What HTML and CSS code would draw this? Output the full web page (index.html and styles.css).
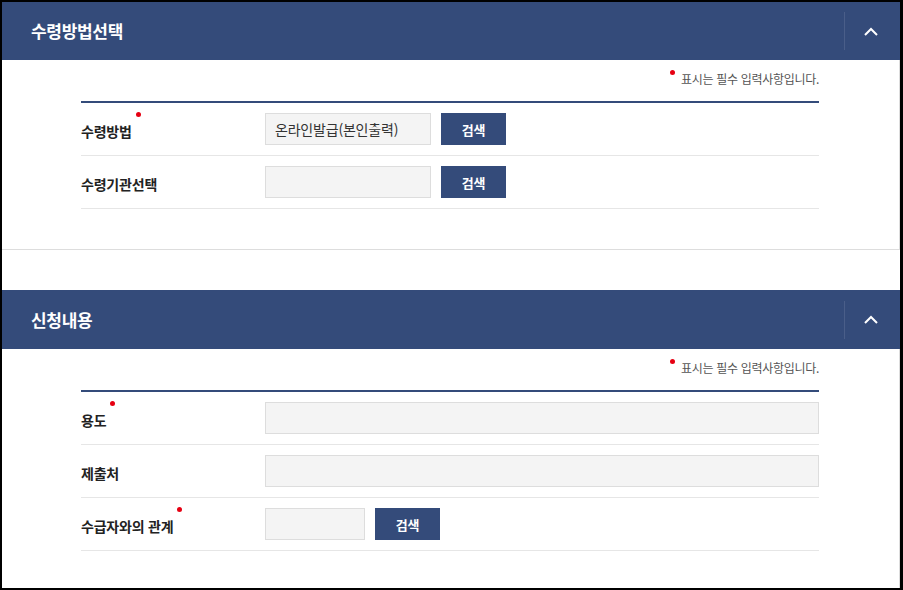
FILE: index.html
```html
<!DOCTYPE html>
<html lang="ko">
<head>
    <meta charset="UTF-8">
    <meta name="viewport" content="width=device-width, initial-scale=1.0">
    <title>수령방법선택</title>
    <link rel="stylesheet" href="styles.css">
</head>
<body>
    <div class="wrap">
        <section class="panel">
            <div class="panel-head">
                <h2>수령방법선택</h2>
                <button class="toggle" type="button" aria-label="접기">
                    <svg width="14" height="9" viewBox="0 0 14 9"><polyline points="1,8 7,2 13,8" fill="none" stroke="#fff" stroke-width="2"/></svg>
                </button>
            </div>
            <div class="panel-body">
                <p class="note"><span class="note-dot"></span>표시는 필수 입력사항입니다.</p>
                <div class="form-table">
                    <div class="form-row">
                        <div class="th"><span class="req">수령방법</span></div>
                        <div class="td">
                            <input class="inp inp-mid" type="text" value="온라인발급(본인출력)" readonly>
                            <button class="btn" type="button">검색</button>
                        </div>
                    </div>
                    <div class="form-row">
                        <div class="th"><span>수령기관선택</span></div>
                        <div class="td">
                            <input class="inp inp-mid" type="text" value="" readonly>
                            <button class="btn" type="button">검색</button>
                        </div>
                    </div>
                </div>
            </div>
        </section>

        <section class="panel panel-next">
            <div class="panel-head">
                <h2>신청내용</h2>
                <button class="toggle" type="button" aria-label="접기">
                    <svg width="14" height="9" viewBox="0 0 14 9"><polyline points="1,8 7,2 13,8" fill="none" stroke="#fff" stroke-width="2"/></svg>
                </button>
            </div>
            <div class="panel-body">
                <p class="note"><span class="note-dot"></span>표시는 필수 입력사항입니다.</p>
                <div class="form-table">
                    <div class="form-row">
                        <div class="th"><span class="req">용도</span></div>
                        <div class="td">
                            <input class="inp inp-full" type="text" value="">
                        </div>
                    </div>
                    <div class="form-row">
                        <div class="th"><span>제출처</span></div>
                        <div class="td">
                            <input class="inp inp-full" type="text" value="">
                        </div>
                    </div>
                    <div class="form-row">
                        <div class="th"><span class="req">수급자와의 관계</span></div>
                        <div class="td">
                            <input class="inp inp-short" type="text" value="" readonly>
                            <button class="btn" type="button">검색</button>
                        </div>
                    </div>
                </div>
            </div>
        </section>
    </div>
</body>
</html>
```

FILE: styles.css
```css
html, body {
    margin: 0;
    padding: 0;
    background: #fff;
}
body {
    font-family: "Noto Sans CJK KR", "Noto Sans", sans-serif;
    color: #333;
}
.wrap {
    width: 903px;
    height: 590px;
    box-sizing: border-box;
    border: 2px solid #000;
    border-right-width: 3px;
    overflow: hidden;
}
.panel-next {
    margin-top: 40px;
}
.panel-head {
    height: 58px;
    background: #344b7a;
    display: flex;
    align-items: center;
    justify-content: space-between;
    padding-left: 29px;
}
.panel-next .panel-head {
    height: 59px;
}
.panel-head h2 {
    margin: 0;
    color: #fff;
    font-size: 17px;
    font-weight: 700;
    letter-spacing: -0.3px;
    line-height: 24px;
}
.toggle {
    width: 52px;
    height: 38px;
    margin-right: 4px;
    padding: 0;
    border: 0;
    border-left: 1px solid #4a5e89;
    background: none;
    display: flex;
    align-items: center;
    justify-content: center;
    cursor: pointer;
}
.panel-body {
    border-right: 1px solid #ddd;
    border-bottom: 1px solid #ddd;
    padding: 0 80px 40px 79px;
}
.note {
    margin: 0;
    padding: 9px 0 12px;
    text-align: right;
    font-size: 12px;
    letter-spacing: -0.3px;
    line-height: 20px;
    color: #555;
}
.note-dot {
    display: inline-block;
    width: 5px;
    height: 5px;
    border-radius: 50%;
    background: #e60012;
    margin-right: 6px;
    vertical-align: 9px;
}
.form-table {
    border-top: 2px solid #344b7a;
}
.form-row {
    display: flex;
    align-items: center;
    height: 52px;
    border-bottom: 1px solid #e6e6e6;
}
.th {
    width: 184px;
    flex-shrink: 0;
    padding-top: 3px;
    font-size: 14px;
    font-weight: 700;
    letter-spacing: -0.2px;
    line-height: 20px;
    color: #222;
}
.req {
    position: relative;
}
.req::after {
    content: "";
    position: absolute;
    right: -9px;
    top: -9px;
    width: 5px;
    height: 5px;
    border-radius: 50%;
    background: #e60012;
}
.td {
    flex: 1;
    display: flex;
    align-items: center;
}
.inp {
    height: 32px;
    box-sizing: border-box;
    border: 1px solid #ddd;
    background: #f4f4f4;
    padding: 0 9px;
    font-family: "Noto Sans CJK KR", "Noto Sans", sans-serif;
    font-size: 14px;
    letter-spacing: -0.2px;
    color: #333;
    outline: none;
}
.inp-mid {
    width: 166px;
}
.inp-short {
    width: 100px;
}
.inp-full {
    flex: 1;
    width: auto;
}
.btn {
    margin-left: 10px;
    width: 65px;
    height: 32px;
    border: 0;
    background: #344b7a;
    color: #fff;
    font-family: "Noto Sans CJK KR", "Noto Sans", sans-serif;
    font-size: 13px;
    font-weight: 700;
    letter-spacing: -0.2px;
    cursor: pointer;
}
```
